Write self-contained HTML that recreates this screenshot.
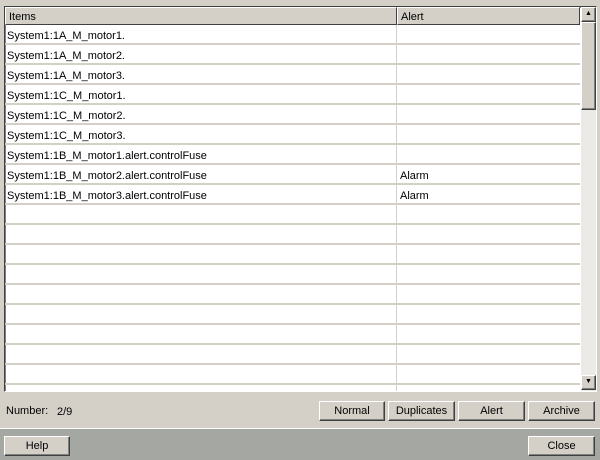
<!DOCTYPE html>
<html><head><style>
*{margin:0;padding:0;box-sizing:border-box}
body{width:600px;height:460px;background:#d4d0c8;font-family:"Liberation Sans",Arial,sans-serif;font-size:11px;color:#000;position:relative;overflow:hidden}
.a{position:absolute}
.tbl{left:4px;top:6px;width:593px;height:386px;border:1px solid #404040;border-right-color:#fff;border-bottom-color:#fff;background:#fff;box-shadow:inset 1px 1px 0 #808080}
.hd{top:7px;height:18px;background:#d4d0c8;border:1px solid;border-color:#fff #404040 #404040 #fff;padding:3px 0 0 3px}
.row{left:5px;width:575px;height:20px;border-bottom:2px solid #d4d0c8}
.row span{position:absolute;top:5px}
.btn{height:20px;background:#d4d0c8;border:1px solid;border-color:#fff #404040 #404040 #fff;box-shadow:inset -1px -1px 0 #808080;text-align:center;line-height:19px}
.sb{left:581px;top:7px;width:15px;height:384px;background:#eceae6}
</style></head><body>
<div class="a tbl"></div>
<div class="a hd" style="left:5px;width:392px">Items</div>
<div class="a hd" style="left:397px;width:183px">Alert</div>
<div id="rows"></div>
<div class="a" style="left:396px;top:25px;width:1px;height:366px;background:#d4d0c8"></div>
<div class="a sb"></div>
<div class="a btn" style="left:581px;top:7px;width:15px;height:15px;line-height:12px;font-size:7px">▲</div>
<div class="a btn" style="left:581px;top:22px;width:15px;height:88px"></div>
<div class="a btn" style="left:581px;top:375px;width:15px;height:15px;line-height:12px;font-size:7px">▼</div>
<div class="a" style="left:6px;top:405px">Number:</div>
<div class="a" style="left:57px;top:406px">2/9</div>
<div class="a btn" style="left:319px;top:401px;width:66px">Normal</div>
<div class="a btn" style="left:388px;top:401px;width:67px">Duplicates</div>
<div class="a btn" style="left:458px;top:401px;width:67px">Alert</div>
<div class="a btn" style="left:528px;top:401px;width:67px">Archive</div>
<div class="a" style="left:0;top:428px;width:600px;height:1px;background:#fff"></div>
<div class="a" style="left:0;top:429px;width:600px;height:31px;background:#a5a7a3"></div>
<div class="a btn" style="left:4px;top:436px;width:66px">Help</div>
<div class="a btn" style="left:528px;top:436px;width:67px">Close</div>
<script>
var d=[["System1:1A_M_motor1.",""],["System1:1A_M_motor2.",""],["System1:1A_M_motor3.",""],["System1:1C_M_motor1.",""],["System1:1C_M_motor2.",""],["System1:1C_M_motor3.",""],["System1:1B_M_motor1.alert.controlFuse",""],["System1:1B_M_motor2.alert.controlFuse","Alarm"],["System1:1B_M_motor3.alert.controlFuse","Alarm"]];
var h="";for(var i=0;i<18;i++){var r=d[i]||["",""];var t=25+i*20;if(t+20>392)break;h+='<div class="a row" style="top:'+t+'px"><span style="left:2px">'+r[0]+'</span><span style="left:395px">'+r[1]+'</span></div>';}
document.getElementById("rows").innerHTML=h;
</script>
</body></html>
